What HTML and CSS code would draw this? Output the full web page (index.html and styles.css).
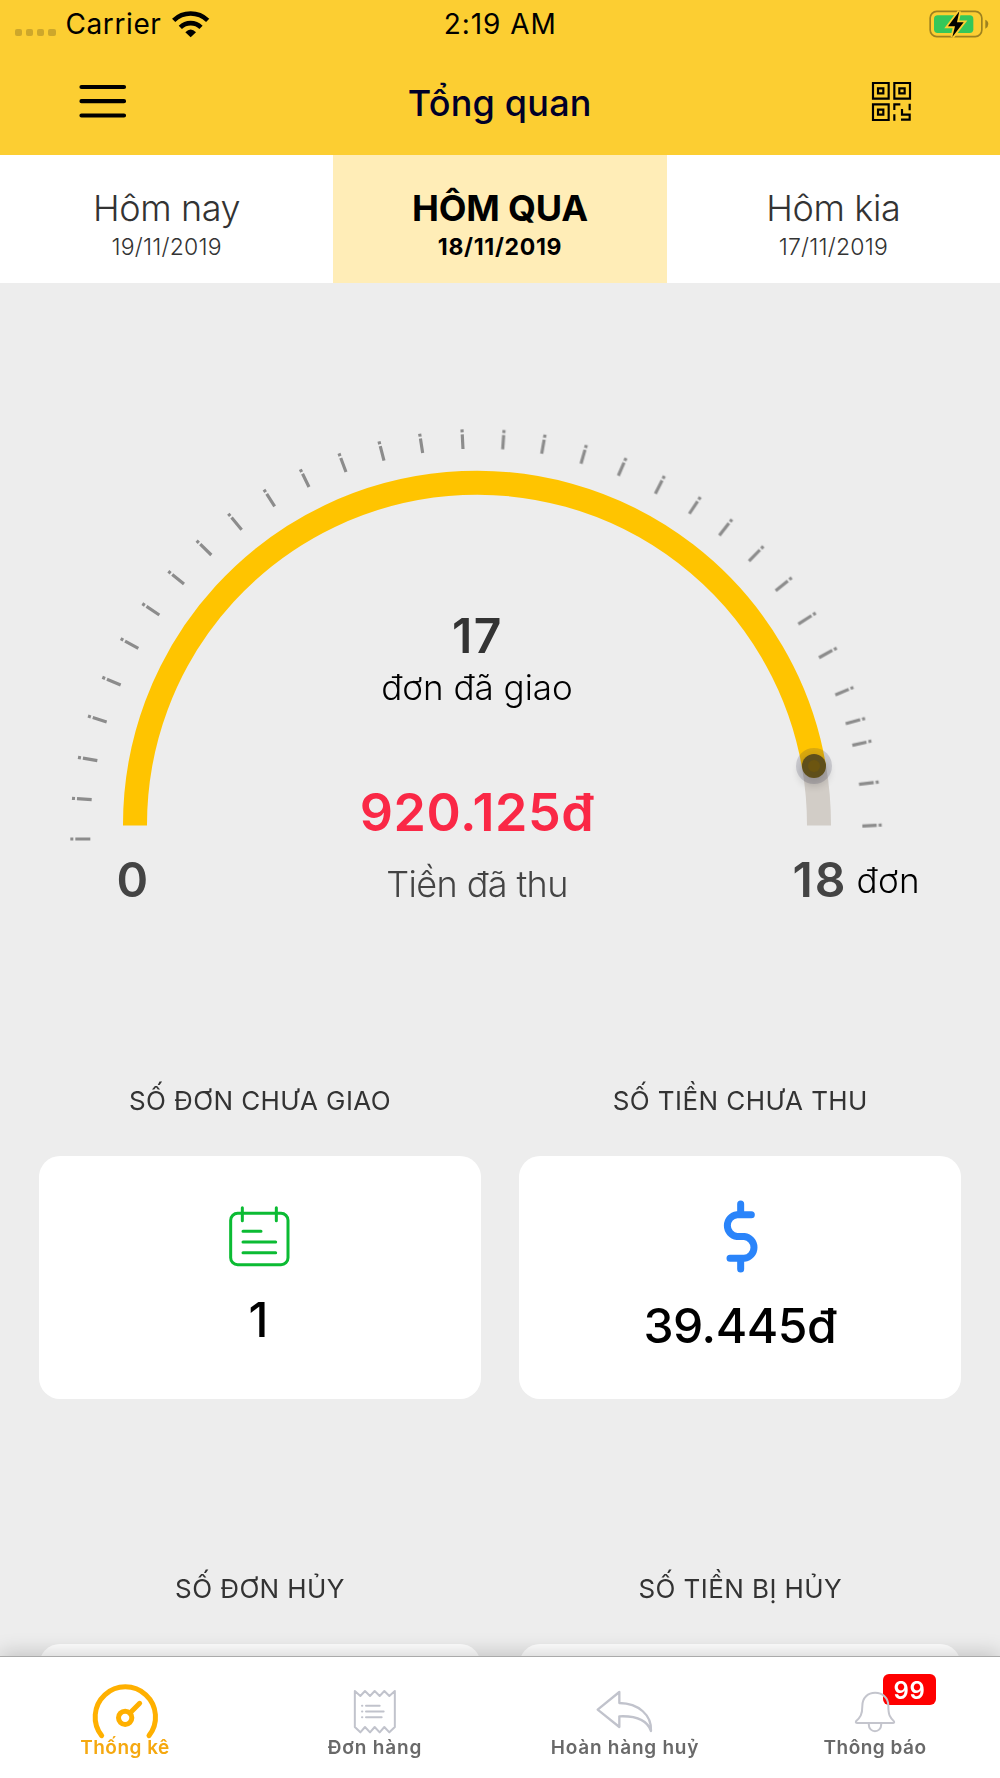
FILE: index.html
```html
<!DOCTYPE html>
<html lang="vi">
<head>
<meta charset="utf-8">
<title>Tổng quan</title>
<link rel="stylesheet" href="styles.css">
</head>
<body>
<div class="screen">
  <header class="header">
    <div class="status">
      <div class="status-left">
        <div class="signal"><i></i><i></i><i></i><i></i></div>
        <span class="carrier">Carrier</span>
        <svg class="wifi" viewBox="517 29 111 84" fill="none" stroke="#000" stroke-width="14">
          <path d="M522 60A74 74 0 0 1 624 60"/>
          <path d="M542 81A45 45 0 0 1 604 81"/>
          <path d="M573 111L557 96Q573 79 589 96Z" fill="#000" stroke="none"/>
        </svg>
      </div>
      <span class="clock">2:19 AM</span>
      <svg class="battery" viewBox="1286 28 180 84">
        <rect x="1289.500" y="32" width="155" height="76" rx="20" fill="none" stroke="#9d811f" stroke-width="5"/>
        <rect x="1301" y="44" width="118" height="53" rx="11" fill="#34c759"/>
        <path d="M1455 57Q1464 61 1464 70T1455 84Z" fill="#9d811f"/>
        <path d="M1377 32L1343 77H1364L1356 109L1390 65H1370Z" fill="#000" stroke="#fcce32" stroke-width="11" paint-order="stroke"/>
      </svg>
    </div>
    <div class="navbar">
      <svg class="menu" viewBox="0 0 48 34" stroke="#000" stroke-width="4.200" stroke-linecap="round"><path d="M2.500 3H45M2.500 17.200H45M2.500 31.500H45"/></svg>
      <h1>Tổng quan</h1>
      <svg class="qr" viewBox="1116 246 117 117" fill="none" stroke="#000" stroke-width="6.500">
        <path d="M1119 249h47v47h-47zM1183 249h47v47h-47zM1119 313h47v47h-47zM1134 265h16v15h-16zM1198 265h16v15h-16zM1134 329h16v15h-16z"/>
        <path d="M1183 330V313H1201M1183 343V362M1229 311V331M1206 327V344H1229V359H1203"/>
      </svg>
    </div>
  </header>

  <nav class="days">
    <div class="day"><span class="day-name">Hôm nay</span><span class="day-date">19/11/2019</span></div>
    <div class="day active"><span class="day-name">HÔM QUA</span><span class="day-date">18/11/2019</span></div>
    <div class="day"><span class="day-name">Hôm kia</span><span class="day-date">17/11/2019</span></div>
  </nav>

  <main class="content">
    <section class="gauge">
      <svg class="dial" viewBox="0 283 954 568" fill="none">
        <defs>
          <filter id="soft" x="-100%" y="-100%" width="300%" height="300%"><feGaussianBlur stdDeviation="4"/></filter>
        </defs>
        <g class="ticks">
          <path transform="translate(50 410) scale(.33333)" d="M61 1287L121 1287M66 1165L125 1169M84 1042L142 1052M114 918L170 936M157 802L212 825M212 686L265 715M277 581L328 615M355 484L402 522M440 392L484 435M535 311L575 359M642 239L674 289M751 178L777 231M867 130L888 186M987 94L1002 152M1109 71L1118 129M1236 58L1239 117"/>
          <path transform="translate(500 410) scale(.33333)" d="M12 60L8 118M135 74L125 131M259 105L243 161M378 144L355 197M493 198L466 251M601 261L568 311M696 328L658 376M790 409L747 453M875 503L827 542M947 609L895 642M1010 714L957 743M1060 832L1006 855M1095 925L1037 941M1114 993L1057 1006M1136 1116L1077 1123M1145 1245L1087 1248"/>
        </g>
        <path d="M814 766.500A342 342 0 0 1 819 825.500" stroke="#d2cdc7" stroke-width="24"/>
        <path d="M135 825.500A342 342 0 0 1 814 766.500" stroke="#ffc400" stroke-width="24"/>
        <circle cx="814" cy="771" r="15" fill="#000" opacity=".16" filter="url(#soft)"/>
        <circle cx="814" cy="766" r="18" fill="#303050" opacity=".18"/>
        <circle cx="814" cy="766" r="12" fill="#5f4f1b"/>
        <circle cx="814" cy="766" r="6" fill="#6c5510"/>
      </svg>
      <div class="readout">
        <strong class="count">17</strong>
        <span class="count-label">đơn đã giao</span>
        <strong class="amount">920.125đ</strong>
        <span class="amount-label">Tiền đã thu</span>
      </div>
      <div class="range">
        <b class="min">0</b>
        <div class="max"><b>18</b><span>đơn</span></div>
      </div>
    </section>

    <section class="stats">
      <article class="stat">
        <h2>SỐ ĐƠN CHƯA GIAO</h2>
        <div class="card orders">
          <svg viewBox="688 438 183 183" fill="none" stroke="#0bbb33" stroke-width="9" stroke-linecap="round">
            <rect x="693" y="460" width="172" height="154" rx="21"/>
            <path d="M728 443V482M830 443V482M730 514H784M730 546H828M730 578.500H828"/>
          </svg>
          <b class="one">1</b>
        </div>
      </article>
      <article class="stat">
        <h2>SỐ TIỀN CHƯA THU</h2>
        <div class="card money">
          <svg viewBox="661 421 120 219" fill="none" stroke="#2a84fa" stroke-width="21" stroke-linecap="round">
            <path d="M723 433V465M723 596V628M755 465H712A33 33 0 0 0 712 530.500H734A33 33 0 0 1 734 596H691"/>
          </svg>
          <b>39.445đ</b>
        </div>
      </article>
      <article class="stat">
        <h2>SỐ ĐƠN HỦY</h2>
        <div class="card"></div>
      </article>
      <article class="stat">
        <h2>SỐ TIỀN BỊ HỦY</h2>
        <div class="card"></div>
      </article>
    </section>
  </main>

  <nav class="tabbar">
    <div class="tab active">
      <svg viewBox="225 321 300 234" fill="none" stroke="#ffb000" stroke-width="15" stroke-linecap="round">
        <path d="M305 557A90.500 90.500 0 1 1 447 557M390 489L419 460"/><circle cx="375.500" cy="503.500" r="20"/>
      </svg>
      <span class="t1">Thống kê</span>
    </div>
    <div class="tab">
      <svg viewBox="975 321 300 234" fill="none" stroke="#c1c3cc" stroke-width="6" stroke-linecap="round" stroke-linejoin="round">
        <path d="M1064.500 423L1081 438L1095 423L1110 438L1124 423L1139 438L1153 423L1168 438L1184.500 423V531L1168 547L1153 531L1139 547L1124 531L1110 547L1095 531L1081 547L1064.500 531Z"/>
        <path d="M1098 467H1139M1098 484.500H1151M1098 502H1145M1086 467H1087M1086 484.500H1087M1086 502H1087"/>
      </svg>
      <span class="t2">Đơn hàng</span>
    </div>
    <div class="tab">
      <svg viewBox="225 321 300 234" fill="none" stroke="#c1c3cc" stroke-width="7" stroke-linejoin="round">
        <path d="M293 479L358 426V459C416 460 456 496 453 543C441 508 405 497 358 499V531Z"/>
      </svg>
      <span class="t3">Hoàn hàng huỷ</span>
    </div>
    <div class="tab">
      <span class="badge">99</span>
      <svg viewBox="975 321 300 234" fill="none" stroke="#c4c5cd" stroke-width="6" stroke-linejoin="round">
        <path d="M1087 468C1087 443 1104 428.500 1125.500 428.500S1165 443 1165 468C1165 496 1170 502 1182 514Q1184 519 1179 519H1072Q1066 519 1068 514C1081 502 1087 494 1087 468Z"/>
        <path d="M1106.500 520V525A18.500 18.500 0 0 0 1143.500 525V520"/>
      </svg>
      <span class="t4">Thông báo</span>
    </div>
  </nav>
</div>
</body>
</html>
```
FILE: styles.css
```css
* { box-sizing: border-box; }
body { margin: 0; font-family: Inter, "Liberation Sans", sans-serif; color: #000; }
h1, h2 { margin: 0; }
svg { display: block; flex: none; overflow: visible; }

.screen { width: 1000px; height: 1778px; display: flex; flex-direction: column; overflow: hidden; background: #ededed; }

.header { flex: none; height: 154.7px; background: #fcce32; }
.status { display: grid; grid-template-columns: 1fr auto 1fr; height: 48px; align-items: center; padding: 0 11px 0 14.500px; line-height: 48px; font-size: 28px; }
.status-left { display: flex; align-items: center; }
.signal { display: flex; gap: 4px; margin: 17px 9.800px 0 0; }
.signal i { width: 7.300px; height: 7.300px; border-radius: 2px; background: #cda72b; }
.carrier { letter-spacing: .6px; }
.wifi { width: 37px; height: 28px; margin-left: 10.500px; }
.clock { letter-spacing: .95px; padding-right: 3px; }
.battery { width: 60px; height: 28px; justify-self: end; }

.navbar { display: flex; align-items: center; justify-content: space-between; height: 106.700px; padding: 0 89px 0 78.500px; }
.menu { width: 48px; height: 34px; }
.navbar h1 { font-size: 36px; font-weight: 480; line-height: 44px; color: #000028; letter-spacing: .2px; padding: 3px 0 0 1px; }
.qr { width: 39px; height: 39px; }

.days { flex: none; display: grid; grid-template-columns: repeat(3, 1fr); height: 128.300px; background: #fff; }
.day { display: flex; flex-direction: column; align-items: center; padding-top: 31.500px; color: #333; font-weight: 330; }
.day-name { font-size: 36px; line-height: 44px; letter-spacing: -.4px; }
.day-date { font-size: 23px; line-height: 34px; letter-spacing: .2px; }
.day.active { background: #ffedb7; color: #000; font-weight: 700; }
.day.active .day-name { letter-spacing: -.15px; }
.day.active .day-date { letter-spacing: .7px; }

.content { flex: 1; min-height: 0; overflow: hidden; }
.gauge { display: grid; width: 954px; height: 625.500px; }
.gauge > * { grid-area: 1 / 1; }
.dial { width: 954px; height: 568px; }
.ticks { stroke: #8c8c8c; stroke-width: 9.500; stroke-dasharray: 9 6 200; filter: blur(.5px); }
.readout { display: flex; flex-direction: column; align-items: center; padding-top: 325px; }
.count { font-size: 48px; font-weight: 600; line-height: 56px; letter-spacing: 1.500px; padding-left: 1px; color: #333; }
.count-label { font-size: 35px; font-weight: 320; line-height: 44px; letter-spacing: 0; margin: 1px 0 71.800px; }
.amount { font-size: 52px; font-weight: 600; line-height: 64px; letter-spacing: .55px; color: #fa2846; }
.amount-label { font-size: 36px; font-weight: 320; line-height: 44px; letter-spacing: -.6px; margin-top: 17px; color: #444; }
.range { align-self: end; display: flex; justify-content: space-between; line-height: 56px; padding: 0 34px 0 116.500px; color: #444; }
.range b { font-size: 48px; font-weight: 600; letter-spacing: 2px; }
.max { display: flex; gap: 9px; }
.max span { font-size: 35px; font-weight: 320; letter-spacing: .4px; color: #000; }

.stats { display: grid; grid-template-columns: repeat(2, 442px); column-gap: 38.300px; row-gap: 171.900px; padding: 174.500px 0 0 39px; }
.stat h2 { font-size: 26px; font-weight: 400; line-height: 36px; letter-spacing: .42px; text-align: center; color: #333; }
.card { display: flex; flex-direction: column; align-items: center; height: 243.700px; margin-top: 36.700px; border-radius: 21px; background: #fff; }
.card b { font-size: 48px; font-weight: 500; line-height: 56px; }
.orders { padding: 50.300px 1px 0 0; gap: 25.200px; }
.orders svg { width: 61px; height: 61px; }
.orders .one { padding-right: 2px; }
.money { padding-top: 44.700px; gap: 25px; }
.money svg { width: 40px; height: 73px; }
.money b { letter-spacing: -.45px; padding-right: 1px; }

.tabbar { position: relative; flex: none; display: grid; grid-template-columns: repeat(4, 1fr); height: 122px; border-top: 1px solid #aaa; background: #fff; box-shadow: 0 -2px 20px rgba(0, 0, 0, .2); }
.tab { position: relative; display: flex; flex-direction: column; align-items: center; color: #696969; font-size: 19px; font-weight: 600; line-height: 25px; }
.tab svg { position: relative; width: 100px; height: 78px; }
.tab.active { color: #f5a80f; }
.t1 { letter-spacing: .5px; }
.t2 { letter-spacing: .85px; }
.t3 { letter-spacing: .75px; }
.t4 { letter-spacing: .5px; }
.badge { position: absolute; left: 133px; top: 17px; width: 53px; height: 31px; border-radius: 6px; background: #f00; color: #fff; font-size: 24px; line-height: 33px; letter-spacing: .6px; text-align: center; }
```
